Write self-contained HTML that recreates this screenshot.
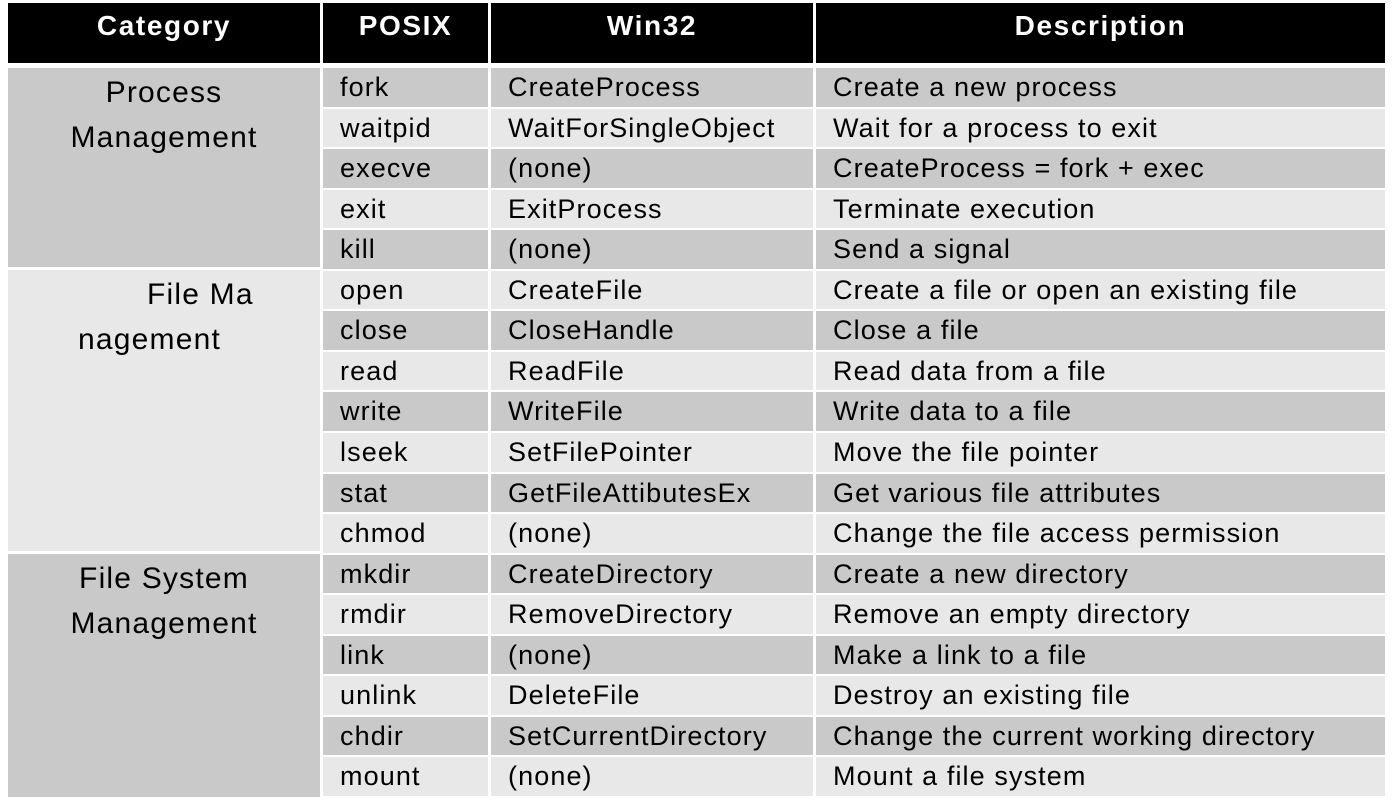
<!DOCTYPE html>
<html><head><meta charset="utf-8"><style>
body{margin:0;width:1394px;height:808px;background:#fff;position:relative;overflow:hidden;font-family:"Liberation Sans",sans-serif;}
.c{position:absolute;box-sizing:border-box;font-size:27px;letter-spacing:1.1px;color:#000;line-height:38px;padding-left:17px;white-space:nowrap;}
.h{background:#000;color:#fff;font-weight:bold;text-align:center;padding:0;line-height:46px;font-size:28px;letter-spacing:1.6px;}
.d{background:#c9c9c9}.l{background:#e8e8e8}
.cat{text-align:center;padding:0;font-size:30px;letter-spacing:1.2px;line-height:45px;padding-top:2px;}
</style></head><body>
<div class="c h" style="left:8px;top:3px;width:312px;height:60px">Category</div>
<div class="c h" style="left:323px;top:3px;width:165px;height:60px">POSIX</div>
<div class="c h" style="left:491px;top:3px;width:322px;height:60px">Win32</div>
<div class="c h" style="left:816px;top:3px;width:569px;height:60px">Description</div>
<div class="c d cat" style="left:8px;top:68px;width:312px;height:199px">Process<br>Management</div>
<div class="c l cat" style="left:8px;top:270px;width:312px;height:281px;text-align:left;"><span style="padding-left:139px">File Ma</span><br><span style="padding-left:70px">nagement</span></div>
<div class="c d cat" style="left:8px;top:554px;width:312px;height:243px">File System<br>Management</div>
<div id="rows"></div>
<script>
var r=[["fork","CreateProcess","Create a new process"],["waitpid","WaitForSingleObject","Wait for a process to exit"],["execve","(none)","CreateProcess = fork + exec"],["exit","ExitProcess","Terminate execution"],["kill","(none)","Send a signal"],["open","CreateFile","Create a file or open an existing file"],["close","CloseHandle","Close a file"],["read","ReadFile","Read data from a file"],["write","WriteFile","Write data to a file"],["lseek","SetFilePointer","Move the file pointer"],["stat","GetFileAttibutesEx","Get various file attributes"],["chmod","(none)","Change the file access permission"],["mkdir","CreateDirectory","Create a new directory"],["rmdir","RemoveDirectory","Remove an empty directory"],["link","(none)","Make a link to a file"],["unlink","DeleteFile","Destroy an existing file"],["chdir","SetCurrentDirectory","Change the current working directory"],["mount","(none)","Mount a file system"]];
var cols=[[323,165],[491,322],[816,569]],h="";
for(var i=0;i<r.length;i++){var t=68+Math.round(i*40.55),b=68+Math.round((i+1)*40.55)-2;
for(var j=0;j<3;j++)h+='<div class="c '+(i%2?'l':'d')+'" style="left:'+cols[j][0]+'px;top:'+t+'px;width:'+cols[j][1]+'px;height:'+(b-t)+'px">'+r[i][j].replace(/</g,'&lt;')+'</div>';}
document.getElementById('rows').innerHTML=h;
</script>
</body></html>
